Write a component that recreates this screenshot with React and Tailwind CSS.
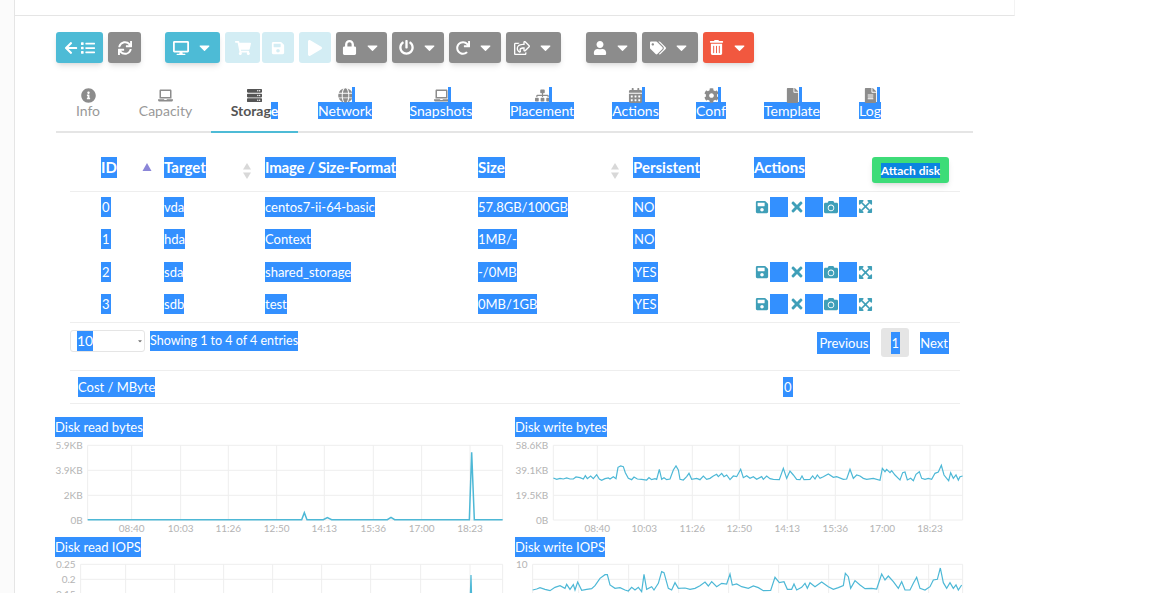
import {
  FaArrowLeft, FaList, FaSync, FaDesktop, FaShoppingCart, FaSave, FaPlay, FaLock, FaPowerOff, FaRedo,
  FaRegShareSquare, FaUser, FaTags, FaTrashAlt, FaCaretDown, FaInfoCircle, FaLaptop, FaServer, FaGlobe,
  FaSitemap, FaCalendarAlt, FaCog, FaFile, FaFileAlt, FaTimes, FaCamera, FaExpandArrowsAlt,
} from 'react-icons/fa';

// Selected text look
function Sel({ children, className = '' }) {
  return <span className={`bg-[#3390ff] text-white inline-block ${className}`}>{children}</span>;
}

function ToolBtn({ w, tone = 'gray', children, caret }) {
  const tones = {
    gray: 'bg-[#8c8c8c] text-white shadow-md',
    teal: 'bg-[#4dbbd6] text-white shadow-md',
    light: 'bg-[#d3edf4] text-white',
    red: 'bg-[#f1583f] text-white shadow-md',
  };
  return (
    <button className={`h-[31px] rounded-[3px] flex items-center justify-center gap-[7px] text-[16px] shrink-0 ${tones[tone]}`} style={{ width: w }}>
      {children}
      {caret && <FaCaretDown className="text-[17px]" />}
    </button>
  );
}

const TABS = [
  { label: 'Info', w: 64, Icon: FaInfoCircle },
  { label: 'Capacity', w: 91, Icon: FaLaptop },
  { label: 'Storage', w: 87, Icon: FaServer, active: true },
  { label: 'Network', w: 94, Icon: FaGlobe, sel: true },
  { label: 'Snapshots', w: 98, Icon: FaLaptop, sel: true },
  { label: 'Placement', w: 104, Icon: FaSitemap, sel: true },
  { label: 'Actions', w: 83, Icon: FaCalendarAlt, sel: true },
  { label: 'Conf', w: 68, Icon: FaCog, sel: true },
  { label: 'Template', w: 94, Icon: FaFile, sel: true },
  { label: 'Log', w: 62, Icon: FaFileAlt, sel: true },
];

function Tab({ tab }) {
  const { label, w, Icon, active, sel } = tab;
  return (
    <div
      className={`h-[52px] -mb-[2px] pt-[8px] flex flex-col items-center border-b-2 ${active ? 'border-[#4dbbd6]' : 'border-transparent'}`}
      style={{ width: w }}
    >
      <div className="h-[13px] flex items-center relative">
        <Icon className={`text-[15px] ${active ? 'text-[#555]' : 'text-[#8c8c8c]'}`} />
        {sel && <span className="absolute -right-[2px] -top-[2px] w-[3px] h-[17px] bg-[#3390ff]" />}
      </div>
      {sel ? (
        <Sel className="text-[14px] leading-[17px]">{label}</Sel>
      ) : active ? (
        <span className="text-[14px] leading-[17px] font-bold text-[#555]">Storag<Sel>e</Sel></span>
      ) : (
        <span className="text-[14px] leading-[17px] text-[#999]">{label}</span>
      )}
    </div>
  );
}

function SortArrows({ className = '' }) {
  return (
    <svg width="10" height="16" viewBox="0 0 10 16" className={className}>
      <path d="M5 0 L9 6.5 H1 Z" fill="#d8d8d8" />
      <path d="M5 16 L9 9.5 H1 Z" fill="#d8d8d8" />
    </svg>
  );
}

function RowActions() {
  return (
    <div className="flex items-center h-[20px] text-[#3f9fb8]">
      <FaSave className="text-[14px] mx-[1px]" />
      <Sel className="w-[18px] h-[20px]" />
      <FaTimes className="text-[16px] ml-[1px]" />
      <Sel className="w-[18px] h-[20px]" />
      <FaCamera className="text-[14px] mx-[1px]" />
      <Sel className="w-[18px] h-[20px]" />
      <FaExpandArrowsAlt className="text-[15px] ml-[1px]" />
    </div>
  );
}

const DISKS = [
  { id: 0, target: 'vda', image: 'centos7-ii-64-basic', size: '57.8GB/100GB', pers: 'NO', actions: true, h: 'h-[33px]' },
  { id: 1, target: 'hda', image: 'Context', size: '1MB/-', pers: 'NO', h: 'h-[33px]' },
  { id: 2, target: 'sda', image: 'shared_storage', size: '-/0MB', pers: 'YES', actions: true, h: 'h-[32px]' },
  { id: 3, target: 'sdb', image: 'test', size: '0MB/1GB', pers: 'YES', actions: true, h: 'h-[33px]' },
];

const READ_BYTES = [[143,329],[785,329],[793,308],[801,329],[850,329],[862,323],[875,329],[1042,329],[1053,322],[1064,329],[1288,329],[1295,127],[1303,329],[1388,329]];
const READ_IOPS = [[1286,700],[1293,495],[1299,700]];
const WRITE_BYTES = [[160,204],[170,208],[180,205],[190,207],[200,204],[210,207],[220,207],[228,201],[240,203],[250,207],[256,197],[262,206],[272,198],[280,206],[290,194],[298,207],[305,211],[315,206],[325,204],[330,207],[340,200],[348,206],[354,172],[362,168],[370,170],[376,188],[385,205],[395,209],[402,201],[412,207],[425,208],[440,210],[447,203],[455,209],[465,206],[470,208],[478,178],[485,208],[492,203],[500,209],[510,207],[520,180],[528,168],[535,180],[540,208],[550,210],[560,200],[567,190],[575,208],[590,205],[600,209],[610,198],[620,208],[630,205],[640,198],[650,193],[655,200],[665,190],[672,200],[680,195],[690,209],[700,198],[710,200],[722,178],[730,203],[740,197],[750,205],[760,200],[770,208],[785,200],[790,208],[800,198],[810,206],[820,208],[838,209],[850,175],[860,205],[870,183],[880,195],[890,208],[900,209],[906,198],[912,209],[930,208],[938,198],[945,207],[952,195],[960,205],[970,200],[985,192],[1000,202],[1010,200],[1030,208],[1040,207],[1050,178],[1060,205],[1070,195],[1080,198],[1090,205],[1100,208],[1120,205],[1140,211],[1147,175],[1155,185],[1160,178],[1170,188],[1175,182],[1185,195],[1195,205],[1200,210],[1208,188],[1215,186],[1222,210],[1232,205],[1240,212],[1248,193],[1258,185],[1265,205],[1275,208],[1285,205],[1295,208],[1305,190],[1315,186],[1324,166],[1332,195],[1340,205],[1346,212],[1352,188],[1360,205],[1368,195],[1375,210],[1380,200],[1388,198]];
const WRITE_IOPS = [[98,540],[110,537],[120,533],[135,538],[150,542],[165,532],[180,527],[195,535],[200,523],[210,538],[220,524],[225,540],[233,516],[245,541],[260,538],[275,536],[285,527],[300,505],[315,494],[322,494],[330,525],[345,535],[360,533],[375,540],[385,543],[395,532],[405,540],[415,532],[425,545],[432,493],[440,538],[455,530],[462,540],[475,520],[485,485],[492,488],[505,535],[515,540],[525,518],[535,535],[555,534],[570,538],[585,535],[600,527],[615,516],[625,528],[635,515],[650,530],[665,520],[680,522],[690,492],[697,525],[710,522],[725,530],[745,535],[760,528],[775,533],[790,542],[812,541],[825,502],[838,518],[852,515],[862,538],[875,538],[882,522],[890,540],[905,532],[915,520],[922,535],[930,518],[945,530],[965,516],[985,530],[1000,538],[1015,533],[1030,527],[1036,490],[1045,500],[1052,535],[1065,512],[1080,525],[1095,536],[1115,535],[1130,537],[1145,492],[1155,510],[1165,498],[1180,515],[1195,535],[1205,515],[1215,540],[1230,540],[1240,520],[1250,502],[1260,535],[1275,540],[1290,530],[1300,510],[1312,508],[1321,474],[1330,518],[1340,535],[1350,518],[1360,535],[1368,525],[1375,540],[1385,525]];

const TIMES = ['08:40', '10:03', '11:26', '12:50', '14:13', '15:36', '17:00', '18:23'];

// coords below are taken at 3x, with the chart's top-left at (45, yo)
function Chart({ title, left, grid, hlines, ylabels, points, yo, stroke = 1.2, bottom }) {
  const sx = (z) => z / 3 - 15;
  const sy = (z) => z / 3 - yo;
  const right = 1388;
  const top = hlines[0];
  const end = hlines[hlines.length - 1];
  return (
    <div className="h-[120px]">
      <Sel className="block w-fit text-[13px] leading-[20px]">{title}</Sel>
      <svg width="460" height="100" className="block" style={{ fontFamily: 'Lato, sans-serif' }}>
        {hlines.map((h) => (
          <line key={h} x1={sx(left)} x2={sx(right)} y1={sy(h)} y2={sy(h)} stroke="#eeeeee" />
        ))}
        {[left, ...grid, right].map((g) => (
          <line key={g} x1={sx(g)} x2={sx(g)} y1={sy(top)} y2={sy(end)} stroke="#eeeeee" />
        ))}
        {ylabels.map((l, i) => (
          <text key={i} x={sx(left) - 5} y={sy(hlines[i]) + 4} textAnchor="end" fontSize="10" fill="#b4b4b4">{l}</text>
        ))}
        {bottom && grid.map((g, i) => (
          <text key={g} x={sx(g)} y={sy(366)} textAnchor="middle" fontSize="10" fill="#b4b4b4">{TIMES[i]}</text>
        ))}
        <polyline
          points={points.map(([x, y]) => `${sx(x)},${sy(y)}`).join(' ')}
          fill="none"
          stroke="#4db8d6"
          strokeWidth={stroke}
        />
      </svg>
    </div>
  );
}

export default function App() {
  return (
    <div className="h-[593px] overflow-hidden bg-white flex text-[13px] text-[#555]" style={{ fontFamily: 'Lato, sans-serif' }}>
      <div className="w-[15px] shrink-0 bg-[#fbfbfb] border-r border-[#e5e5e5]" />
      <div className="w-[1000px] shrink-0">
        <div className="h-[16px] border-b border-b-[#e5e5e5] border-r border-r-[#f3f3f3]" />

        {/* Toolbar */}
        <div className="ml-[41px] mt-[16px] flex">
          <ToolBtn w={47} tone="teal"><span className="flex items-center gap-[3px]"><FaArrowLeft className="text-[14px]" /><FaList className="text-[14px]" /></span></ToolBtn>
          <div className="ml-[5px]"><ToolBtn w={33}><FaSync className="text-[14px]" /></ToolBtn></div>
          <div className="ml-[24px]"><ToolBtn w={55} tone="teal" caret><FaDesktop /></ToolBtn></div>
          <div className="ml-[5px] flex gap-[2px]">
            <ToolBtn w={35} tone="light"><FaShoppingCart /></ToolBtn>
            <ToolBtn w={32} tone="light"><FaSave className="text-[14px]" /></ToolBtn>
          </div>
          <div className="ml-[5px] flex gap-[5px]">
            <ToolBtn w={32} tone="light"><FaPlay /></ToolBtn>
            <ToolBtn w={51} caret><FaLock className="text-[15px]" /></ToolBtn>
            <ToolBtn w={52} caret><FaPowerOff className="text-[15px]" /></ToolBtn>
            <ToolBtn w={52} caret><FaRedo className="text-[14px]" /></ToolBtn>
            <ToolBtn w={55} caret><FaRegShareSquare /></ToolBtn>
          </div>
          <div className="ml-[25px] flex gap-[5px]">
            <ToolBtn w={51} caret><FaUser className="text-[14px]" /></ToolBtn>
            <ToolBtn w={56} caret><FaTags /></ToolBtn>
            <ToolBtn w={51} tone="red" caret><FaTrashAlt className="text-[15px]" /></ToolBtn>
          </div>
        </div>

        {/* Tabs */}
        <div className="ml-[41px] w-[917px] mt-[18px] flex border-b-2 border-[#e5e5e5]">
          {TABS.map((t) => <Tab key={t.label} tab={t} />)}
        </div>

        {/* Disks table */}
        <div className="ml-[55px] w-[890px] mt-[17px]">
          <table className="w-full table-fixed border-collapse">
            <colgroup>
              <col className="w-[94px]" />
              <col className="w-[101px]" />
              <col className="w-[213px]" />
              <col className="w-[155px]" />
              <col className="w-[121px]" />
              <col />
            </colgroup>
            <thead>
              <tr className="h-[41px] border-b border-[#eeeeee] text-[15px] leading-[21px] font-bold text-left align-top">
                <th className="pl-[31px] pt-[7px] relative">
                  <Sel>ID</Sel>
                  <svg width="10" height="8" viewBox="0 0 10 8" className="absolute left-[72px] top-[13px]"><path d="M5 0 L9.5 8 H.5 Z" fill="#8b86d8" /></svg>
                </th>
                <th className="pt-[7px] relative">
                  <Sel>Target</Sel>
                  <SortArrows className="absolute left-[78px] top-[13px]" />
                </th>
                <th className="pt-[7px]"><Sel className="tracking-[-0.2px]">Image / Size-Format</Sel></th>
                <th className="pt-[7px] relative">
                  <Sel>Size</Sel>
                  <SortArrows className="absolute left-[132px] top-[13px]" />
                </th>
                <th className="pt-[7px]"><Sel>Persistent</Sel></th>
                <th className="pt-[7px] relative">
                  <Sel>Actions</Sel>
                  <button className="absolute left-[118px] top-[7px] w-[77px] h-[26px] rounded-[3px] bg-[#3ddc78] shadow-md flex items-center justify-center">
                    <span className="bg-[#0a85e0] text-white text-[12px] leading-[15px]">Attach disk</span>
                  </button>
                </th>
              </tr>
            </thead>
            <tbody className="leading-[20px]">
              {DISKS.map((d) => (
                <tr key={d.id} className={`${d.h} align-top`}>
                  <td className="pl-[31px] pt-[5px]"><Sel className="px-[1px]">{d.id}</Sel></td>
                  <td className="pt-[5px]"><Sel>{d.target}</Sel></td>
                  <td className="pt-[5px]"><Sel>{d.image}</Sel></td>
                  <td className="pt-[5px]"><Sel>{d.size}</Sel></td>
                  <td className="pt-[5px]"><Sel className="px-[1px]">{d.pers}</Sel></td>
                  <td className="pt-[5px]">{d.actions && <RowActions />}</td>
                </tr>
              ))}
            </tbody>
          </table>

          {/* Table footer */}
          <div className="h-[48px] border-t border-[#eeeeee] flex items-start">
            <div className="mt-[7px] w-[75px] h-[22px] border border-[#e5e5e5] rounded-[3px] pl-[6px] flex items-center relative">
              <Sel className="text-[14px] leading-[20px] w-[16px]">10</Sel>
              <FaCaretDown className="absolute right-[1px] top-[7px] text-[6px] text-[#777]" />
            </div>
            <Sel className="ml-[5px] mt-[8px] text-[12.5px] leading-[20px]">Showing 1 to 4 of 4 entries</Sel>
            <div className="ml-auto mr-[11px] mt-[5px] flex items-center">
              <Sel className="leading-[22px] px-[2px]">Previous</Sel>
              <div className="ml-[11px] w-[28px] h-[29px] bg-[#e5e5e5] rounded-[3px] flex items-center justify-center">
                <Sel className="leading-[22px] px-[1px]">1</Sel>
              </div>
              <Sel className="ml-[11px] leading-[22px] pr-[1px]">Next</Sel>
            </div>
          </div>

          {/* Cost row */}
          <div className="h-[34px] border-y border-[#eeeeee] flex items-center">
            <div className="w-[713px] pl-[8px]"><Sel className="leading-[20px]">Cost / MByte</Sel></div>
            <Sel className="leading-[20px] px-[1px]">0</Sel>
          </div>
        </div>

        {/* Charts */}
        <div className="ml-[40px] mt-[13px] grid grid-cols-[460px_460px]">
          <Chart
            title="Disk read bytes" left={143} yo={28} bottom
            grid={[275, 422, 565, 710, 853, 1000, 1145, 1290]}
            hlines={[106, 181, 256, 330]}
            ylabels={['5.9KB', '3.9KB', '2KB', '0B']}
            points={READ_BYTES} stroke={1.5}
          />
          <Chart
            title="Disk write bytes" left={160} yo={28} bottom
            grid={[292, 433, 577, 718, 862, 1006, 1147, 1290]}
            hlines={[106, 181, 256, 330]}
            ylabels={['58.6KB', '39.1KB', '19.5KB', '0B']}
            points={WRITE_BYTES}
          />
          <Chart
            title="Disk read IOPS" left={122} yo={148}
            grid={[257, 404, 551, 698, 845, 992, 1142, 1290]}
            hlines={[463, 508, 553]}
            ylabels={['0.25', '0.2', '0.15']}
            points={READ_IOPS}
          />
          <Chart
            title="Disk write IOPS" left={98} yo={148}
            grid={[236, 386, 536, 686, 836, 986, 1136, 1286]}
            hlines={[463, 508, 553]}
            ylabels={['10', '', '']}
            points={WRITE_IOPS}
          />
        </div>
      </div>
    </div>
  );
}
